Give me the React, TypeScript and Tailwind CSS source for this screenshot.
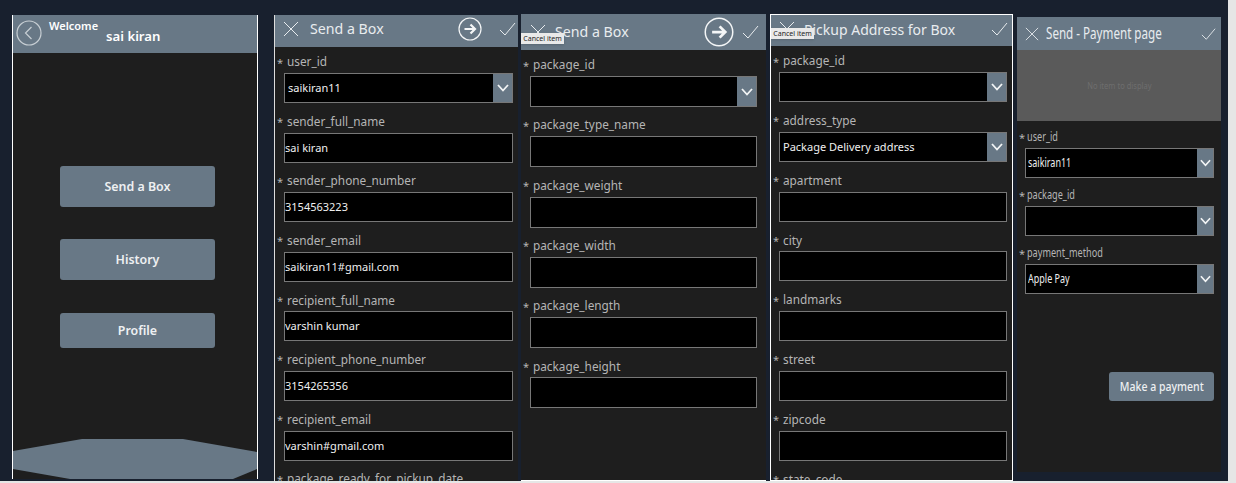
import React from "react";

const font = { fontFamily: '"Noto Sans", "Open Sans", sans-serif' };

function XIcon({ size = 16 }: { size?: number }) {
  return (
    <svg width={size} height={size} viewBox="0 0 16 16" fill="none" stroke="#e8ecef" strokeWidth="1">
      <path d="M1 1 L15 15 M15 1 L1 15" />
    </svg>
  );
}
function CheckIcon({ w = 17, h = 14 }: { w?: number; h?: number }) {
  return (
    <svg width={w} height={h} viewBox="0 0 17 14" fill="none" stroke="#e8ecef" strokeWidth="1">
      <path d="M1 8 L6 13 L16 1" />
    </svg>
  );
}
function NextIcon({ size = 24 }: { size?: number }) {
  return (
    <svg width={size} height={size} viewBox="0 0 24 24" fill="none" stroke="#f4f6f7">
      <circle cx="12" cy="12" r="11" strokeWidth="1.2" />
      <path d="M6.5 12 H17 M12.5 7.5 L17 12 L12.5 16.5" strokeWidth="2.2" />
    </svg>
  );
}
function Chevron({ w = 12 }: { w?: number }) {
  return (
    <svg width={w} height={8} viewBox="0 0 12 8" fill="none" stroke="#f2f4f5" strokeWidth="1.8">
      <path d="M1 1 L6 6.5 L11 1" />
    </svg>
  );
}
function Tooltip({ top }: { top: string }) {
  return (
    <div className={`absolute left-0 ${top} h-[11px] w-[43px] bg-[#e9e9e9] text-[7px] leading-[11px] text-center text-[#222] shadow-sm`}>
      Cancel item
    </div>
  );
}

function Field({
  label,
  value,
  select,
  h,
  ml,
  mr,
  inH,
}: {
  label: string;
  value?: string;
  select?: boolean;
  h: string;
  ml: string;
  mr: string;
  inH: string;
}) {
  return (
    <div className={`${h} shrink-0`}>
      <div className="mb-[2px] flex h-[18px] items-center text-[11.8px] text-[#b5b5b5]">
        <span className="w-[12px] pl-[2px] text-[11px] leading-none">*</span>
        <span className="whitespace-nowrap">{label}</span>
      </div>
      <div className={`${inH} ${ml} ${mr} flex border border-[#777] bg-black`}>
        <div className={`flex-1 truncate ${select ? "pl-[3px]" : "pl-[0px]"} text-[11px] leading-[28px] text-[#f0f0f0]`}>{value}</div>
        {select && (
          <div className="flex w-[19px] items-center justify-center bg-[#687886]">
            <Chevron />
          </div>
        )}
      </div>
    </div>
  );
}

function Home() {
  const btn =
    "w-[155px] flex items-center justify-center rounded-[3px] bg-[#687886] pl-[1px] pt-[2px] text-[12.4px] font-semibold text-[#eef0f2]";
  return (
    <div className="mt-[15px] flex h-[464px] w-[246px] shrink-0 flex-col border-x border-white bg-[#1e1e1e]">
      <div className="flex h-[38px] shrink-0 items-start bg-[#687886] pl-[3px] pt-[5px]">
        <svg width="26" height="26" viewBox="0 0 26 26" fill="none" stroke="#c8cfd4" strokeWidth="1.2">
          <circle cx="13" cy="13" r="12" />
          <path d="M15.5 7 L9.5 13 L15.5 19" />
        </svg>
        <div className="relative ml-[7px] flex-1 text-white">
          <div className="-mt-[2px] text-[11px] font-semibold leading-[16px]">Welcome</div>
          <div className="ml-[57px] -mt-[8px] text-[13.2px] font-semibold leading-[20px]">sai kiran</div>
        </div>
      </div>
      <div className="flex flex-1 flex-col items-center pl-[4px] pt-[113px]">
        <div className={`${btn} h-[41px]`}>Send a Box</div>
        <div className={`${btn} mt-[32px] h-[41px]`}>History</div>
        <div className={`${btn} mt-[33px] h-[35px]`}>Profile</div>
      </div>
      <svg className="shrink-0" width="244" height="40" viewBox="0 0 244 40" preserveAspectRatio="none">
        <polygon points="0,12 69,0 170,0 244,13 244,30 220,40 57,40 0,30" fill="#687886" />
      </svg>
    </div>
  );
}

function Send1() {
  const rows: [string, string, boolean?][] = [
    ["user_id", "saikiran11", true],
    ["sender_full_name", "sai kiran"],
    ["sender_phone_number", "3154563223"],
    ["sender_email", "saikiran11#gmail.com"],
    ["recipient_full_name", "varshin kumar"],
    ["recipient_phone_number", "3154265356"],
    ["recipient_email", "varshin#gmail.com"],
    ["package_ready_for_pickup_date", ""],
  ];
  return (
    <div className="ml-[16px] mt-[15px] flex h-[466px] w-[244px] shrink-0 flex-col overflow-hidden border-l border-[#ddd] bg-[#1e1e1e]">
      <div className="flex h-[32px] shrink-0 items-center bg-[#687886] pb-[4px] pl-[8px] pr-[2px] text-[#e8ecef]">
        <XIcon />
        <span className="ml-[11px] text-[14.2px]">Send a Box</span>
        <span className="ml-auto flex items-center gap-[17px]">
          <NextIcon />
          <CheckIcon />
        </span>
      </div>
      <div className="flex flex-col pt-[6px]">
        {rows.map(([l, v, s]) => (
          <Field key={l} label={l} value={v} select={s} h="h-[59.6px]" ml="ml-[9px]" mr="mr-[5px]" inH="h-[30px]" />
        ))}
      </div>
    </div>
  );
}

function Send2() {
  const rows: [string, boolean?][] = [
    ["package_id", true],
    ["package_type_name"],
    ["package_weight"],
    ["package_width"],
    ["package_length"],
    ["package_height"],
  ];
  return (
    <div className="relative ml-[3px] mt-[14px] flex h-[467px] w-[245px] shrink-0 flex-col overflow-hidden border-b border-white bg-[#1e1e1e]">
      <div className="flex h-[36px] shrink-0 items-center bg-[#687886] pl-[9px] pr-[7px] text-[#e8ecef]">
        <XIcon />
        <span className="ml-[9px] text-[14.2px]">Send a Box</span>
        <span className="ml-auto flex items-center gap-[8px]">
          <NextIcon size={30} />
          <CheckIcon />
        </span>
      </div>
      <Tooltip top="top-[19px]" />
      <div className="flex flex-col pt-[6px]">
        {rows.map(([l, s]) => (
          <Field key={l} label={l} select={s} h="h-[60.3px]" ml="ml-[9px]" mr="mr-[9px]" inH="h-[31px]" />
        ))}
      </div>
    </div>
  );
}

function Pickup() {
  const rows: [string, string, boolean?][] = [
    ["package_id", "", true],
    ["address_type", "Package Delivery address", true],
    ["apartment", ""],
    ["city", ""],
    ["landmarks", ""],
    ["street", ""],
    ["zipcode", ""],
    ["state_code", ""],
  ];
  return (
    <div className="relative ml-[4px] mt-[14px] flex h-[467px] w-[243px] shrink-0 flex-col overflow-hidden border border-white bg-[#1e1e1e]">
      <div className="flex h-[31px] shrink-0 items-center bg-[#687886] pb-[3px] pl-[8px] pr-[4px] text-[#e8ecef]">
        <XIcon />
        <span className="ml-[9px] text-[14px]">Pickup Address for Box</span>
        <span className="ml-auto">
          <CheckIcon />
        </span>
      </div>
      <Tooltip top="top-[13px]" />
      <div className="flex flex-col pt-[6px]">
        {rows.map(([l, v, s]) => (
          <Field key={l} label={l} value={v} select={s} h="h-[59.8px]" ml="ml-[8px]" mr="mr-[5px]" inH="h-[30px]" />
        ))}
      </div>
    </div>
  );
}

function PayField({ label, value }: { label: string; value?: string }) {
  return (
    <div className="h-[58px] shrink-0">
      <div className="flex h-[22px] items-center text-[12.5px] text-[#b5b5b5]">
        <span className="w-[10px] pl-[2px] text-[11px] leading-none">*</span>
        <span className="origin-left scale-x-[0.73] whitespace-nowrap">{label}</span>
      </div>
      <div className="ml-[8px] mr-[7px] flex h-[30px] border border-[#777] bg-black">
        <div className="flex-1 pl-[2px] text-[12.5px] leading-[28px] text-[#f0f0f0]">
          <span className="inline-block origin-left scale-x-[0.72] whitespace-nowrap">{value}</span>
        </div>
        <div className="flex w-[16px] items-center justify-center bg-[#687886]">
          <Chevron w={11} />
        </div>
      </div>
    </div>
  );
}

function Payment() {
  return (
    <div className="ml-[4px] mt-[17px] flex h-[455px] w-[204px] shrink-0 flex-col bg-[#1e1e1e]">
      <div className="flex h-[33px] shrink-0 items-center bg-[#687886] pl-[8px] pr-[5px] text-[#e8ecef]">
        <XIcon size={14} />
        <span className="ml-[7px] origin-left scale-x-[0.75] whitespace-nowrap text-[15.5px]">Send - Payment page</span>
        <span className="ml-auto">
          <CheckIcon w={15} h={14} />
        </span>
      </div>
      <div className="flex h-[71px] shrink-0 items-center justify-center bg-[#5a5a5a] text-[9px] text-[#6e6e6e]">
        <span className="scale-x-[0.84] whitespace-nowrap">No item to display</span>
      </div>
      <div className="flex flex-col pt-[5px]">
        <PayField label="user_id" value="saikiran11" />
        <PayField label="package_id" />
        <PayField label="payment_method" value="Apple Pay" />
      </div>
      <div className="mt-[72px] flex justify-end pr-[7px]">
        <div className="flex h-[29px] w-[105px] items-center justify-center rounded-[3px] bg-[#687886] text-[13px] font-medium text-[#eef0f2]">
          <span className="scale-x-[0.81] whitespace-nowrap">Make a payment</span>
        </div>
      </div>
    </div>
  );
}

export default function App() {
  return (
    <div className="h-[483px] w-[1236px] overflow-hidden bg-[#e6e6e6]" style={font}>
      <div className="flex h-[481px] w-[1228px] overflow-hidden bg-[#18202e] pl-[12px]">
        <Home />
        <Send1 />
        <Send2 />
        <Pickup />
        <Payment />
      </div>
    </div>
  );
}
